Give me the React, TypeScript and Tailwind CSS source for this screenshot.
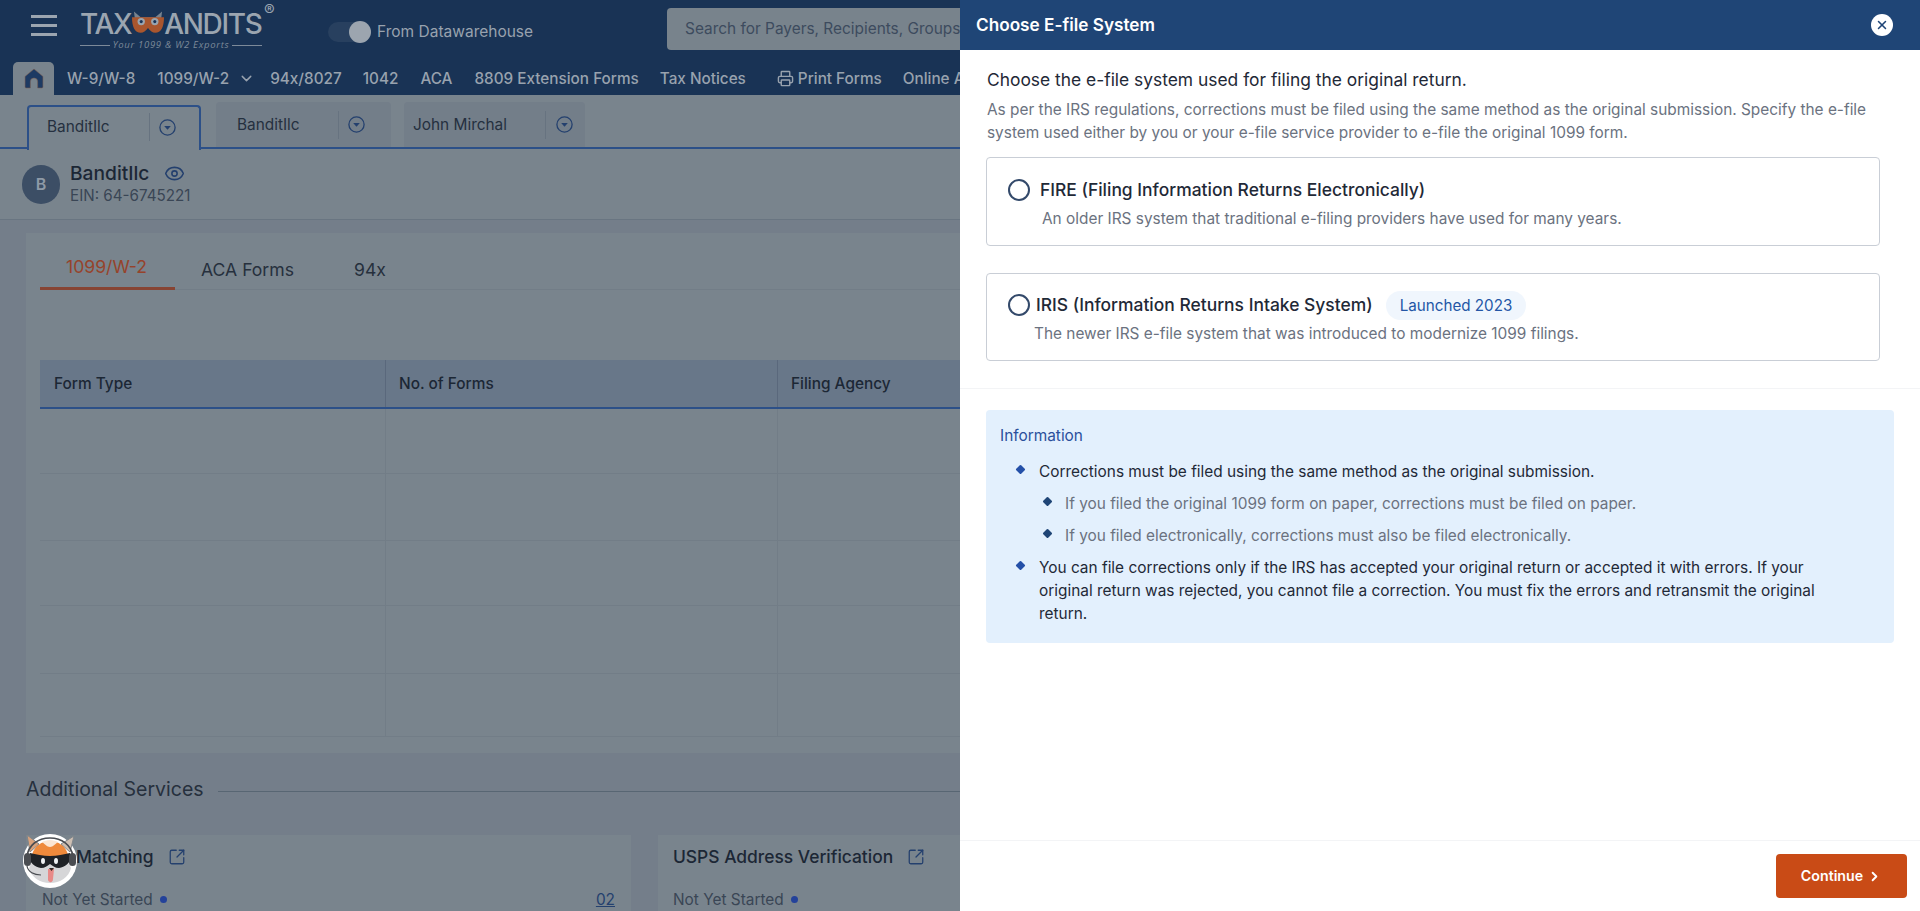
import React from "react";
import { Eye, Printer, SquareArrowOutUpRight, ChevronDown, ChevronRight, X } from "lucide-react";

function DropCircle() {
  return (
    <svg width="17" height="17" viewBox="0 0 17 17" className="shrink-0">
      <circle cx="8.5" cy="8.5" r="7.6" fill="none" stroke="#24406e" strokeWidth="1.3" />
      <path d="M5.2 7h6.6L8.5 10.8z" fill="#24406e" />
    </svg>
  );
}

function Logo() {
  return (
    <div className="flex w-[200px] shrink-0 flex-col">
      <div className="relative flex h-[28px] items-end font-medium text-[#9ba5b0]">
        <span className="text-[28px] leading-[24px] tracking-[-1.4px]">TAX</span>
        <svg width="32" height="28" viewBox="0 0 33 28" className="mb-[-2px] ml-[1px] shrink-0">
          <path d="M3 9 2 1l7 6h15l7-6-1 8z" fill="#78838e" />
          <path d="M0 7h33c0 10-3 16-9 16-3 0-5-2-7.500-5C14 21 12 23 9 23 3 23 0 17 0 7z" fill="#a9562e" />
          <circle cx="9.500" cy="11.500" r="3.800" fill="#9aa5af" />
          <circle cx="23.500" cy="11.500" r="3.800" fill="#9aa5af" />
          <circle cx="9.500" cy="11.500" r="1.600" fill="#1a3559" />
          <circle cx="23.500" cy="11.500" r="1.600" fill="#1a3559" />
        </svg>
        <span className="text-[28px] leading-[24px] tracking-[-1.3px]">ANDITS</span>
        <span className="absolute left-[184px] top-[-6px] text-[16px] font-normal leading-[16px] text-[#9ba5b0]">®</span>
      </div>
      <div className="mt-[3px] flex w-[182px] items-center gap-[3px]">
        <div className="h-px flex-1 bg-[#7d8a99]" />
        <span className="text-[9.5px] italic leading-[12px] tracking-[0.7px] text-[#7d8a99] [font-family:'Open_Sans',sans-serif]">Your 1099 &amp; W2 Exports</span>
        <div className="h-px flex-1 bg-[#7d8a99]" />
      </div>
    </div>
  );
}

function Nav({ children, className = "" }: { children: React.ReactNode; className?: string }) {
  return <span className={"whitespace-nowrap text-[15.3px] font-medium leading-[20px] text-[#98a2ae] " + className}>{children}</span>;
}

function SubTab({ label, w, textW, active }: { label: string; w: string; textW: string; active?: boolean }) {
  return (
    <div
      className={
        "flex h-[45px] items-center rounded-t-[4px] " +
        w +
        (active ? " mb-[-2px] border-2 border-b-0 border-[#2c5088] bg-[#79848d] pb-[3px]" : " mb-[1px] bg-[#737e89]")
      }
    >
      <span className={"whitespace-nowrap text-[15.4px] leading-[20px] text-[#25303f] " + textW}>{label}</span>
      <div className="h-[28px] w-px bg-[#677380]" />
      <div className="ml-[9px]">
        <DropCircle />
      </div>
    </div>
  );
}

function TableRow({ h }: { h: string }) {
  return (
    <div className={"grid grid-cols-[346px_392px_1fr] border-b border-[#727d87] " + h}>
      <div className="border-r border-[#727d87]" />
      <div className="border-r border-[#727d87]" />
      <div />
    </div>
  );
}

function Mascot() {
  return (
    <svg width="56" height="56" viewBox="0 0 56 56" className="absolute left-[22px] top-[833px]">
      <circle cx="28" cy="28" r="27" fill="#ffffff" />
      <path d="M8 19 5 2l12 9z" fill="#d9a27c" stroke="#7f858a" strokeWidth="1" />
      <path d="M48 19 52 3 39 11z" fill="#cdbfb3" stroke="#7f858a" strokeWidth="1" />
      <path d="M10 22c2-9 10-14 18-14s16 5 18 14l-6 4H16z" fill="#ef8a3c" />
      <path d="M20 9c3 2 5 5 8 5s5-3 8-5c-2-1-5-2-8-2s-6 1-8 2z" fill="#fbe6d4" />
      <path d="M7 35c2 9 11 15 21 15s19-6 21-15l-5-10H12z" fill="#d6d6d8" />
      <path d="M26 36h6l-1 10c0 4-4 4-5 1z" fill="#e88a88" />
      <path d="M8 20c6 1 13 3 20 3s14-2 20-3l1 5c-1 5-6 9-12 10-4 0-6-2-9-4-3 2-5 4-9 4-6-1-11-5-12-10z" fill="#1f2226" />
      <ellipse cx="21" cy="28" rx="2" ry="3" fill="#eef0f2" />
      <ellipse cx="34" cy="28" rx="2" ry="3" fill="#eef0f2" />
      <path d="M27 35h5l-2.500 3z" fill="#30241f" />
      <path d="M5 24C6 12 16 5 28 5s21 7 23 18" fill="none" stroke="#4a4d52" strokeWidth="1.6" />
      <rect x="2" y="20" width="7" height="13" rx="3.500" fill="#4a4d52" />
      <rect x="47" y="20" width="7" height="13" rx="3.500" fill="#4a4d52" />
      <path d="M5 33c1 6 7 9 14 9" fill="none" stroke="#4a4d52" strokeWidth="1.2" />
    </svg>
  );
}

function Radio() {
  return <div className="h-[22px] w-[22px] shrink-0 rounded-full border-2 border-[#33496a] bg-white" />;
}

function Diamond({ className }: { className: string }) {
  return <span className={"mt-[6px] block h-[7px] w-[7px] shrink-0 rotate-45 rounded-[1px] " + className} />;
}

export default function App() {
  return (
    <div className="relative h-[911px] w-full overflow-hidden bg-[#747e8a] [font-family:Inter,sans-serif]">
      {/* Page beneath the dimming */}
      <header className="h-[95px] w-[960px] overflow-hidden bg-[#193355]">
        <div className="flex h-[58px]">
          <div className="ml-[31px] mt-[15px] flex h-[21px] w-[26px] shrink-0 flex-col justify-between">
            <div className="h-[3px] bg-[#9ba5b0]" />
            <div className="h-[3px] bg-[#9ba5b0]" />
            <div className="h-[3px] bg-[#9ba5b0]" />
          </div>
          <div className="ml-[23px] mt-[8px]">
            <Logo />
          </div>
          <div className="ml-[48px] mt-[21px] flex h-[22px] shrink-0 items-center">
            <div className="relative h-[20px] w-[43px] rounded-full bg-[#28405f]">
              <div className="absolute right-0 top-[-1px] h-[22px] w-[22px] rounded-full bg-[#9ca5af]" />
            </div>
            <span className="ml-[6px] whitespace-nowrap text-[15.5px] text-[#98a2ae]">From Datawarehouse</span>
          </div>
          <div className="ml-[134px] mt-[8px] flex h-[42px] min-w-0 flex-1 items-center overflow-hidden rounded-l-[4px] bg-[#78838c] pl-[18px]">
            <span className="whitespace-nowrap text-[15.4px] text-[#3d4b5e]">Search for Payers, Recipients, Groups</span>
          </div>
        </div>
        <div className="flex h-[37px] items-end pl-[13px]">
          <div className="flex h-[33px] w-[41px] shrink-0 items-center justify-center rounded-t-[5px] bg-[#79848d]">
            <svg width="20" height="21" viewBox="0 0 19 20">
              <path d="M9.500 1 1 8v10a1 1 0 0 0 1 1h4v-6a3.500 3.500 0 0 1 7 0v6h4a1 1 0 0 0 1-1V8z" fill="#1d3a63" stroke="#7d5a4a" strokeWidth="0.5" />
            </svg>
          </div>
          <div className="flex h-[33px] items-center">
            <Nav className="ml-[13px]">W-9/W-8</Nav>
            <Nav className="ml-[22px]">1099/W-2</Nav>
            <ChevronDown size={17} strokeWidth={2} className="ml-[9px] shrink-0 text-[#98a2ae]" />
            <Nav className="ml-[15px]">94x/8027</Nav>
            <Nav className="ml-[21px]">1042</Nav>
            <Nav className="ml-[22px]">ACA</Nav>
            <Nav className="ml-[22px]">8809 Extension Forms</Nav>
            <Nav className="ml-[21px]">Tax Notices</Nav>
            <Printer size={17} strokeWidth={2} className="ml-[31px] shrink-0 text-[#98a2ae]" />
            <Nav className="ml-[4px]">Print Forms</Nav>
            <Nav className="ml-[21px]">Online Access</Nav>
          </div>
        </div>
      </header>

      <div className="h-[54px] border-b-2 border-[#2c5088] bg-[#79848d] pl-[27px]">
        <div className="flex h-[53px] items-end gap-[15px]">
          <SubTab label="BanditIlc" w="w-[174px]" textW="w-[120px] pl-[18px]" active />
          <SubTab label="BanditIlc" w="w-[175px]" textW="w-[122px] pl-[21px]" />
          <div className="mb-[1px] ml-[-2px] flex h-[45px] w-[181px] items-center rounded-t-[4px] bg-[#737e89]">
            <span className="w-[141px] whitespace-nowrap pl-[9px] text-[15.4px] leading-[20px] text-[#25303f]">John Mirchal</span>
            <div className="h-[28px] w-px bg-[#677380]" />
            <div className="ml-[10px]">
              <DropCircle />
            </div>
          </div>
        </div>
      </div>

      <div className="flex h-[71px] items-center border-b border-[#697581] bg-[#79848d] pl-[22px]">
        <div className="flex h-[39px] w-[38px] items-center justify-center rounded-full bg-[#3c4e65] text-[16px] font-semibold text-[#8e9aa7]">B</div>
        <div className="ml-[10px]">
          <div className="flex items-center gap-[15px]">
            <span className="text-[19.2px] font-medium leading-[24px] text-[#1c2735]">BanditIlc</span>
            <Eye size={21} strokeWidth={1.8} className="text-[#24406e]" />
          </div>
          <div className="text-[15.2px] leading-[22px] text-[#3a4655]">EIN: 64-6745221</div>
        </div>
      </div>

      <div className="px-[26px] pt-[13px]">
        <div className="h-[520px] bg-[#79848d] pl-[14px] pt-[22px]">
          <div className="flex h-[35px] border-b border-[#727d87]">
            <div className="h-[35px] w-[135px] border-b-[3px] border-[#874433] pl-[26px] text-[17.6px] leading-[24px] text-[#96432b]">1099/W-2</div>
            <div className="ml-[26px] pt-[3px] text-[17.6px] leading-[24px] text-[#26303d]">ACA Forms</div>
            <div className="ml-[60px] pt-[3px] text-[17.6px] leading-[24px] text-[#26303d]">94x</div>
          </div>
          <div className="mt-[70px]">
            <div className="grid h-[49px] grid-cols-[346px_392px_1fr] border-b-2 border-[#2c5088] bg-[#687789]">
              <div className="flex items-center border-r border-[#5a687c] pl-[14px] text-[15.4px] font-medium text-[#1c2735]">Form Type</div>
              <div className="flex items-center border-r border-[#5a687c] pl-[13px] text-[15.4px] font-medium text-[#1c2735]">No. of Forms</div>
              <div className="flex items-center pl-[13px] text-[15.4px] font-medium text-[#1c2735]">Filing Agency</div>
            </div>
            <TableRow h="h-[65px]" />
            <TableRow h="h-[67px]" />
            <TableRow h="h-[65px]" />
            <TableRow h="h-[68px]" />
            <TableRow h="h-[63px]" />
          </div>
        </div>

        <div className="mt-[22px] flex items-center">
          <span className="whitespace-nowrap text-[19.5px] leading-[28px] text-[#26303d]">Additional Services</span>
          <div className="ml-[14px] mt-[4px] h-px flex-1 bg-[#586673]" />
        </div>

        <div className="mt-[32px] flex gap-[27px]">
          <div className="h-[90px] w-[605px] bg-[#79848d] pl-[16px] pr-[16px]">
            <div className="flex h-[44px] items-center">
              <span className="text-[17.4px] font-medium text-[#1c2735]">TIN Matching</span>
              <SquareArrowOutUpRight size={18} strokeWidth={1.7} className="ml-[14px] text-[#24406e]" />
            </div>
            <div className="mt-[9px] flex items-center text-[15.4px] text-[#3a4655]">
              <span>Not Yet Started</span>
              <span className="ml-[7px] h-[7px] w-[7px] rounded-full bg-[#24429a]" />
              <span className="ml-auto text-[#24406e] underline">02</span>
            </div>
          </div>
          <div className="h-[90px] w-[605px] bg-[#79848d] pl-[15px]">
            <div className="flex h-[44px] items-center">
              <span className="text-[17.4px] font-medium text-[#1c2735]">USPS Address Verification</span>
              <SquareArrowOutUpRight size={18} strokeWidth={1.7} className="ml-[14px] text-[#24406e]" />
            </div>
            <div className="mt-[9px] flex items-center text-[15.4px] text-[#3a4655]">
              <span>Not Yet Started</span>
              <span className="ml-[7px] h-[7px] w-[7px] rounded-full bg-[#24429a]" />
            </div>
          </div>
        </div>
      </div>

      <Mascot />

      {/* Side panel */}
      <aside className="absolute right-0 top-0 flex h-full w-[960px] flex-col bg-white">
        <div className="flex h-[50px] shrink-0 items-center justify-between bg-[#1f4576] pl-[16px] pr-[27px]">
          <span className="text-[17.2px] font-semibold text-white">Choose E-file System</span>
          <div className="flex h-[22px] w-[22px] items-center justify-center rounded-full bg-white">
            <X size={14} strokeWidth={2.6} className="text-[#1f4576]" />
          </div>
        </div>

        <div className="flex-1 pl-[26px] pr-[26px] pt-[18px]">
          <div className="pl-[1px] text-[17.4px] leading-[24px] text-[#1f2937]">Choose the e-file system used for filing the original return.</div>
          <p className="mt-[6px] w-[900px] pl-[1px] text-[15.4px] leading-[23px] text-[#6b7280]">
            As per the IRS regulations, corrections must be filed using the same method as the original submission. Specify the e-file system used either by you or your e-file service provider to e-file the original 1099 form.
          </p>

          <div className="mt-[13px] h-[89px] w-[894px] rounded-[4px] border border-[#c9ced6] pl-[21px] pt-[20px]">
            <div className="flex h-[24px] items-center">
              <Radio />
              <span className="ml-[10px] text-[17.45px] font-medium leading-[24px] text-[#1f2937]">FIRE (Filing Information Returns Electronically)</span>
            </div>
            <div className="ml-[34px] mt-[6px] text-[15.4px] leading-[22px] text-[#6b7280]">An older IRS system that traditional e-filing providers have used for many years.</div>
          </div>

          <div className="mt-[27px] h-[88px] w-[894px] rounded-[4px] border border-[#c9ced6] pl-[21px] pt-[16px]">
            <div className="flex h-[30px] items-center">
              <Radio />
              <span className="ml-[6px] text-[17.45px] font-medium leading-[24px] text-[#1f2937]">IRIS (Information Returns Intake System)</span>
              <span className="ml-[13px] mt-[1px] flex h-[29px] items-center rounded-full bg-[#f0f6fd] px-[14px] pt-[1px] text-[15.2px] text-[#2456a6]">Launched 2023</span>
            </div>
            <div className="ml-[26px] mt-[3px] text-[15.4px] leading-[22px] text-[#6b7280]">The newer IRS e-file system that was introduced to modernize 1099 filings.</div>
          </div>

          <div className="ml-[-26px] mr-[-26px] mt-[27px] h-px bg-[#f3f4f6]" />

          <div className="mt-[21px] h-[233px] w-[908px] rounded-[4px] bg-[#e3f0fd] pl-[14px] pr-[40px] pt-[15px]">
            <div className="text-[15.4px] leading-[22px] text-[#2a4f9c]">Information</div>
            <div className="mt-[13px] flex flex-col gap-[9px] pl-[17px] text-[15.4px] leading-[23px] text-[#1f2937]">
              <div className="flex gap-[15px]">
                <Diamond className="bg-[#2450a8]" />
                <span>Corrections must be filed using the same method as the original submission.</span>
              </div>
              <div className="flex gap-[14px] pl-[27px] text-[#6b7280]">
                <Diamond className="bg-[#1f4576]" />
                <span>If you filed the original 1099 form on paper, corrections must be filed on paper.</span>
              </div>
              <div className="flex gap-[14px] pl-[27px] text-[#6b7280]">
                <Diamond className="bg-[#1f4576]" />
                <span>If you filed electronically, corrections must also be filed electronically.</span>
              </div>
              <div className="flex gap-[15px]">
                <Diamond className="bg-[#2450a8]" />
                <span>You can file corrections only if the IRS has accepted your original return or accepted it with errors. If your original return was rejected, you cannot file a correction. You must fix the errors and retransmit the original return.</span>
              </div>
            </div>
          </div>
        </div>

        <div className="flex h-[71px] shrink-0 items-start justify-end border-t border-[#f3f4f6] pr-[13px] pt-[13px]">
          <div className="flex h-[44px] w-[131px] items-center justify-center gap-[4px] rounded-[4px] bg-[#c94b16] text-[14.2px] font-semibold text-white">
            <span>Continue</span>
            <ChevronRight size={15} strokeWidth={3} />
          </div>
        </div>
      </aside>
    </div>
  );
}
